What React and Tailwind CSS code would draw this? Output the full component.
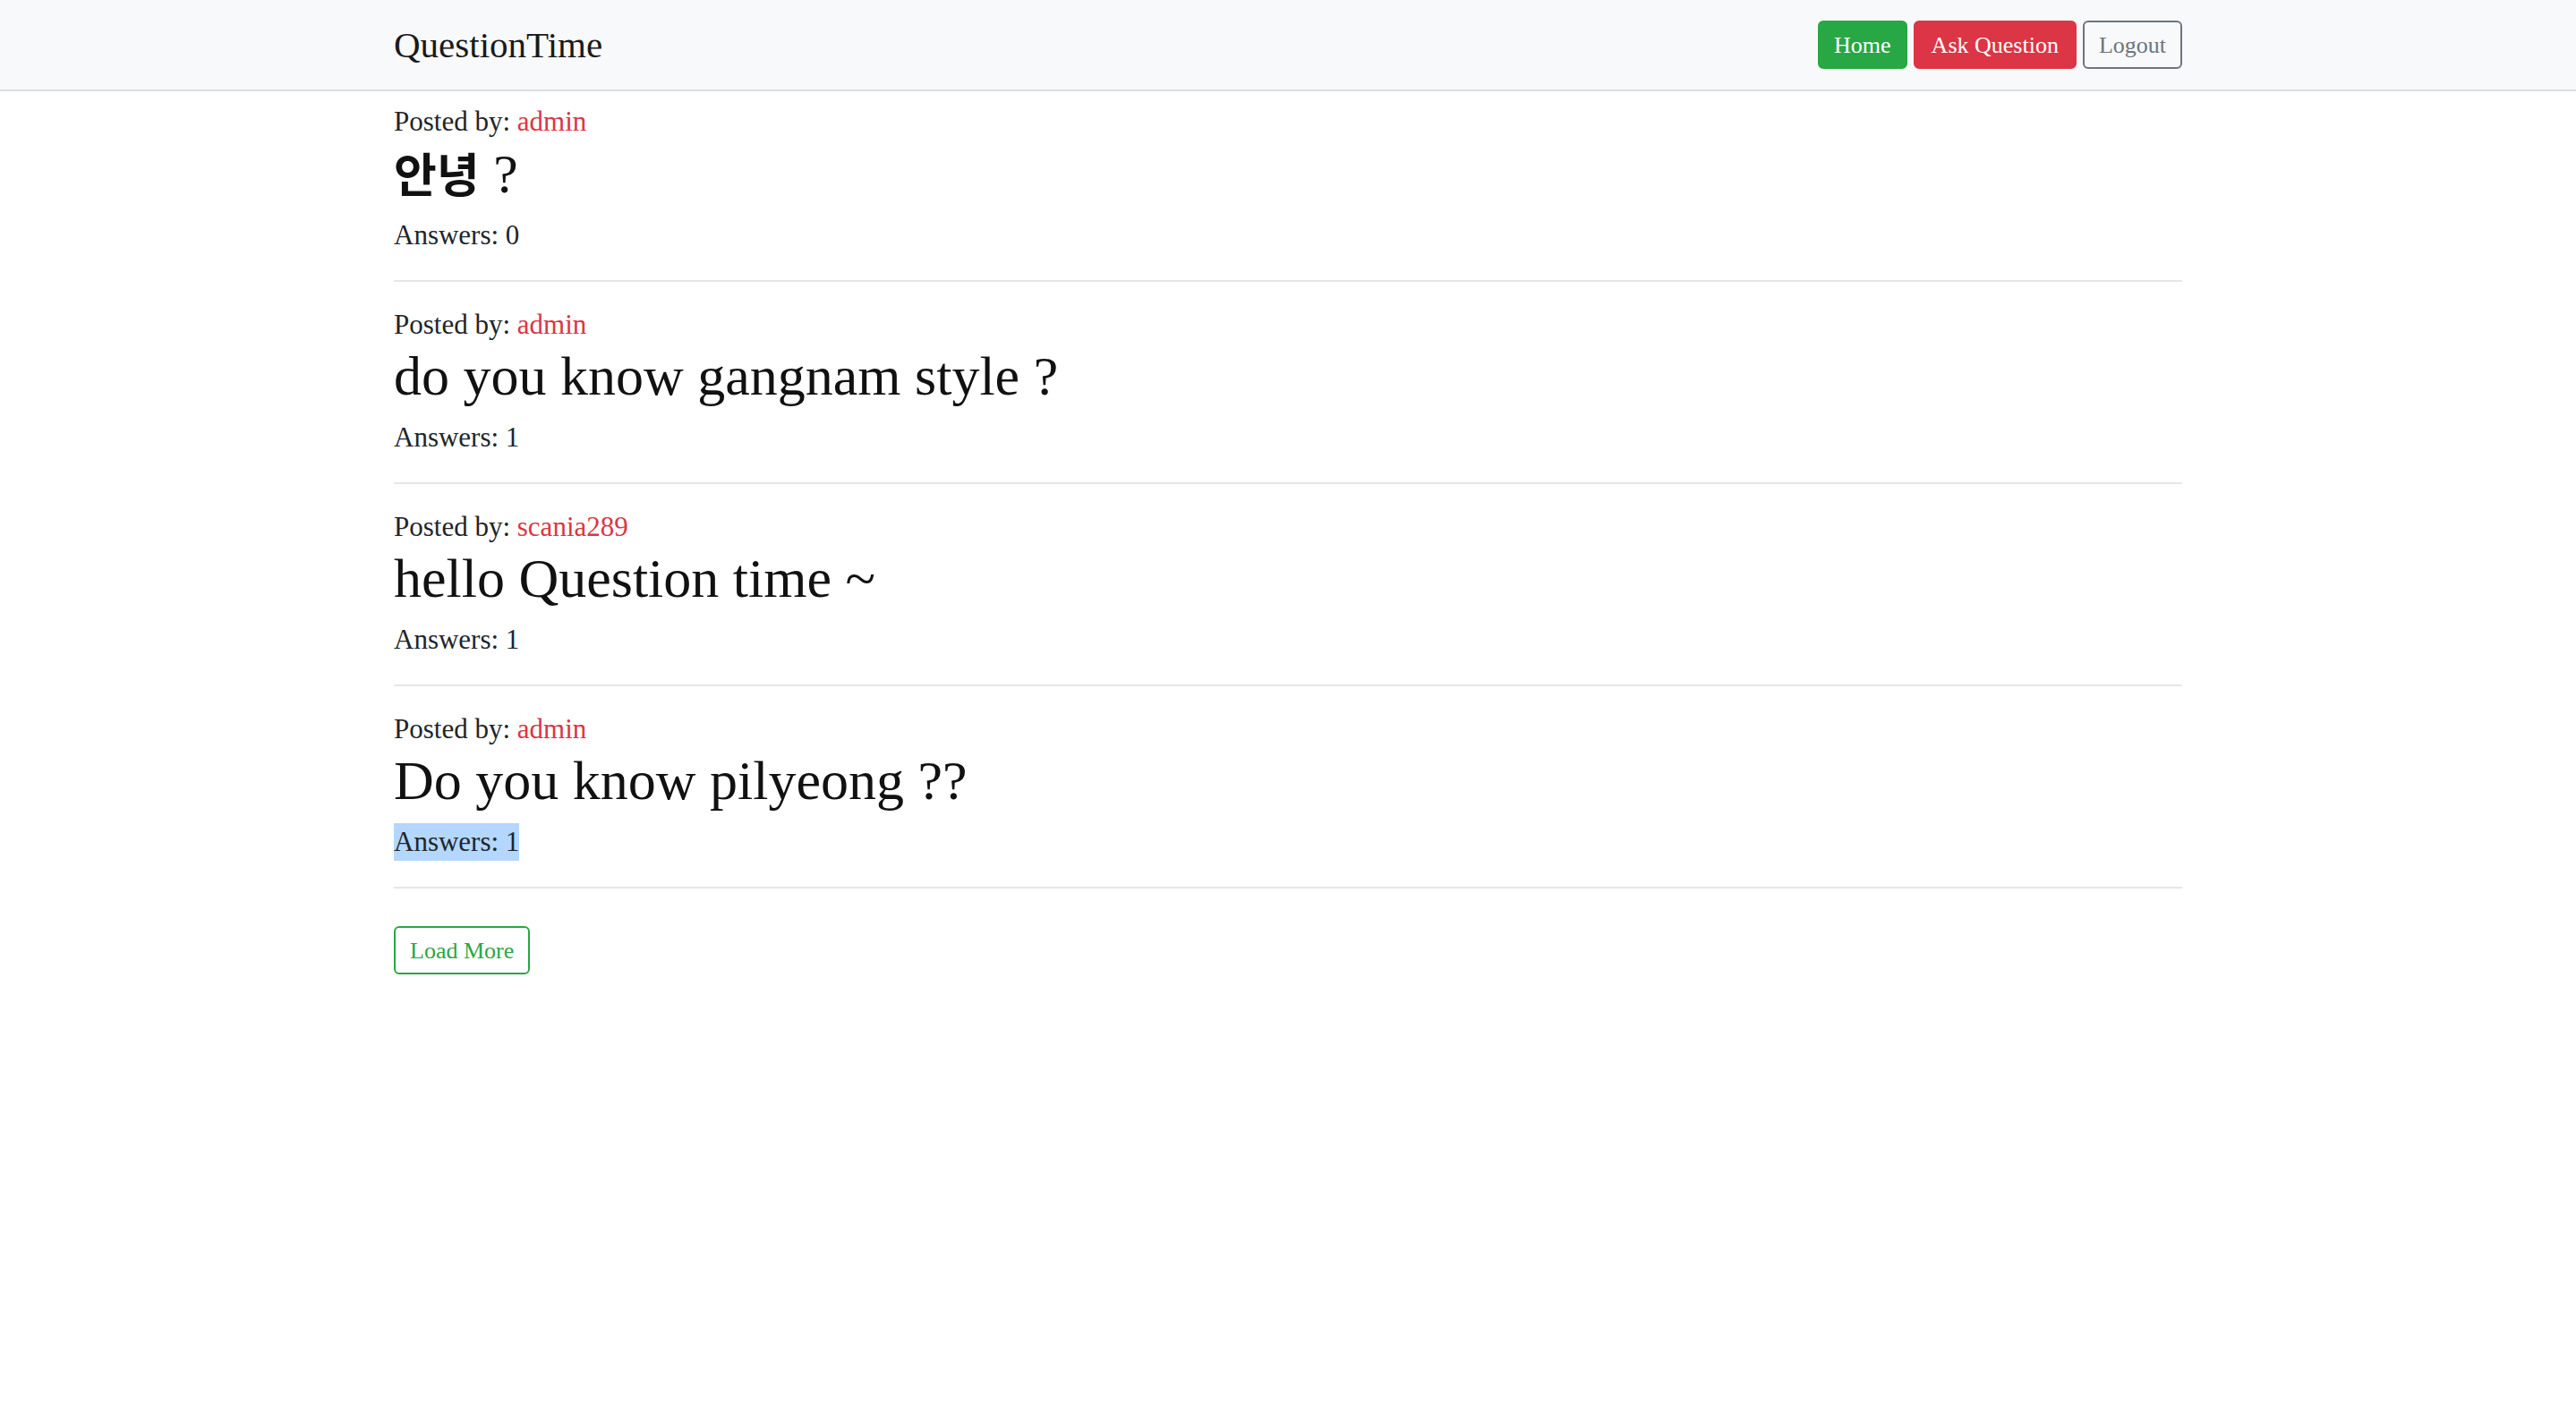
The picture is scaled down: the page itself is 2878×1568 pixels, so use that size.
import React from 'react';

const questions = [
  { id: 1, author: 'admin', title: '안녕 ?', answers: 0 },
  { id: 2, author: 'admin', title: 'do you know gangnam style ?', answers: 1 },
  { id: 3, author: 'scania289', title: 'hello Question time ~', answers: 1 },
  { id: 4, author: 'admin', title: 'Do you know pilyeong ??', answers: 1, selected: true },
];

const serif = { fontFamily: '"Liberation Serif", "Noto Sans CJK KR", serif' };

// hangul falls back to a heavier sans in the original, so render those runs bold
function Title({ text }) {
  const parts = text.split(/([\uAC00-\uD7A3]+)/);
  return parts.map((part, i) =>
    /[\uAC00-\uD7A3]/.test(part) ? (
      <span key={i} className="font-bold text-[52px]" style={{ fontFamily: '"Noto Sans CJK KR", sans-serif' }}>
        {part}
      </span>
    ) : (
      <React.Fragment key={i}>{part}</React.Fragment>
    )
  );
}

function QuestionItem({ q }) {
  return (
    <div>
      <p className="text-[31px] leading-[44px] text-[#212529]">
        Posted by: <span className="text-[#dc3545]">{q.author}</span>
      </p>
      <h2 className="text-[62px] leading-[70px] font-medium text-[#111] mb-[12px]">
        <Title text={q.title} />
      </h2>
      <p className="text-[31px] leading-[44px] text-[#212529] mb-[28px]">
        {q.selected ? (
          <span className="inline-block bg-[#b3d7fe] leading-[42px]">Answers: {q.answers}</span>
        ) : (
          <>Answers: {q.answers}</>
        )}
      </p>
      <hr className="border-0 border-t-2 border-[#e6e6e6] mb-[26px]" />
    </div>
  );
}

export default function App() {
  return (
    <div className="min-h-screen bg-white" style={serif}>
      <nav className="h-[102px] bg-[#f8f9fa] border-b-2 border-[#dedfe1]">
        <div className="mx-auto w-[1998px] h-full flex items-center justify-between">
          <span className="text-[41px] leading-none text-[#1a1a1a]">QuestionTime</span>
          <div className="flex items-center gap-[7px]">
            <button className="h-[54px] px-[16px] text-[26px] text-white bg-[#28a745] border-2 border-[#28a745] rounded-[6px]">
              Home
            </button>
            <button className="h-[54px] px-[18px] text-[26px] text-white bg-[#dc3545] border-2 border-[#dc3545] rounded-[6px]">
              Ask Question
            </button>
            <button className="h-[54px] px-[16px] text-[26px] text-[#6c757d] bg-transparent border-2 border-[#6c757d] rounded-[6px]">
              Logout
            </button>
          </div>
        </div>
      </nav>

      <main className="mx-auto w-[1998px] pt-[12px]">
        {questions.map((q) => (
          <QuestionItem key={q.id} q={q} />
        ))}
        <button className="mt-[16px] h-[54px] px-[16px] text-[26px] text-[#28a745] border-2 border-[#28a745] rounded-[6px] bg-white">
          Load More
        </button>
      </main>
    </div>
  );
}
